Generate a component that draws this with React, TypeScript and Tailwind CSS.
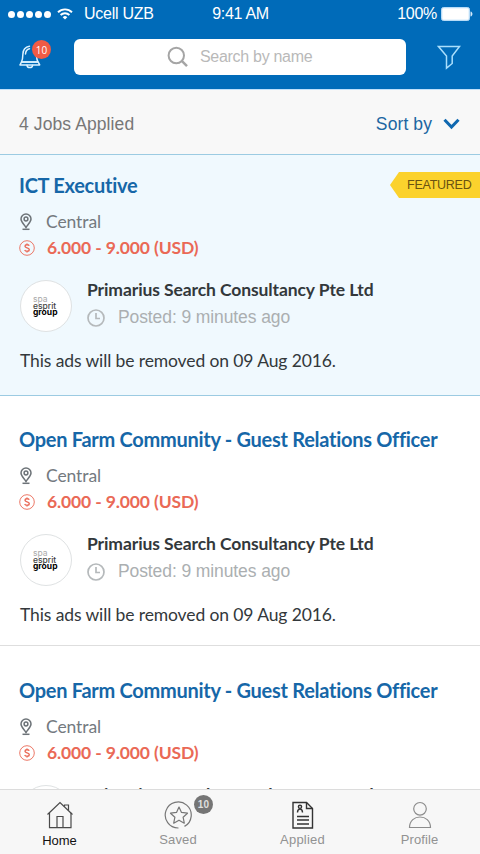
import clsx from 'clsx';
import type { ReactNode } from 'react';

interface Job {
  id: number;
  title: string;
  location: string;
  salary: string;
  company: string;
  posted: string;
  note: string;
  featured?: boolean;
}

const details = {
  location: 'Central',
  salary: '6.000 - 9.000 (USD)',
  company: 'Primarius Search Consultancy Pte Ltd',
  posted: 'Posted: 9 minutes ago',
  note: 'This ads will be removed on 09 Aug 2016.',
};

const jobs: Job[] = [
  { id: 1, title: 'ICT Executive', featured: true, ...details },
  { id: 2, title: 'Open Farm Community - Guest Relations Officer', ...details },
  { id: 3, title: 'Open Farm Community - Guest Relations Officer', ...details },
];

function StatusBar() {
  return (
    <div className="grid h-7 grid-cols-3 items-center pl-2 pr-[7px] text-[16px] text-white">
      <div className="flex items-center whitespace-nowrap">
        <div className="flex gap-[2px]">
          {[0, 1, 2, 3, 4].map((dot) => (
            <span key={dot} className="size-[7px] rounded-full bg-white" />
          ))}
        </div>
        <svg className="ml-[6px]" width="16" height="12" viewBox="0 0 16 12" fill="none" stroke="white" strokeWidth="1.9">
          <path d="M1 4.2a10 10 0 0 1 14 0" />
          <path d="M3.6 7a6.3 6.3 0 0 1 8.8 0" />
          <path d="M8 11.5 5.7 9.2a3.3 3.3 0 0 1 4.6 0z" fill="white" stroke="none" />
        </svg>
        <span className="ml-[11px] tracking-[-0.25px]">Ucell UZB</span>
      </div>
      <span className="text-center tracking-[-0.3px]">9:41 AM</span>
      <div className="flex items-center justify-end">
        <span className="tracking-[-0.3px]">100%</span>
        <svg className="ml-1" width="32" height="14" viewBox="0 0 32 14">
          <rect x="0.5" y="0.5" width="28" height="13" rx="2" fill="#d5eafa" stroke="#b9dcf7" />
          <rect x="1.5" y="1.5" width="26" height="11" rx="1" fill="white" />
          <path d="M29.5 4.5c2.6.6 2.6 4.4 0 5z" fill="#d5eafa" />
        </svg>
      </div>
    </div>
  );
}

function Header() {
  return (
    <header className="h-[89px] shrink-0 bg-[#006bb9]">
      <StatusBar />
      <div className="flex h-[58px] items-center px-[19px]">
        <div className="relative h-[26px] w-[55px]">
          <svg width="22" height="26" viewBox="0 0 22 26" fill="none" stroke="#dcf2ff" strokeWidth="1.5" strokeLinejoin="round" strokeLinecap="round">
            <path d="M10.5 2.2C6 2.9 4 6.5 3.9 10c-.1 3.8-.6 6.3-1.4 8h16.500c-.8-1.7-1.3-3-1.4-5" />
            <path d="M10.5 4.7C7.8 5.4 6.6 7.7 6.5 10" />
            <path d="M1 20.9 2.5 18h16.700l1.500 2.900z" />
            <path d="M8 21.300c.4 3 5.200 3 5.600 0" />
          </svg>
          <span className="absolute -top-[4px] left-[13px] flex size-[19px] items-center justify-center rounded-full bg-[#f05b45] font-['Open_Sans'] text-[10px] leading-none text-white">
            10
          </span>
        </div>
        <div className="flex h-9 w-[332px] items-center rounded-[6px] bg-white pl-[93px] text-[#b9b9b9]">
          <svg width="22" height="22" viewBox="0 0 22 22" fill="none" stroke="#a5a5a5" strokeWidth="2">
            <circle cx="9.3" cy="9.5" r="7.7" />
            <path d="m15 15.2 5 5" strokeWidth="2.4" />
          </svg>
          <span className="ml-[11px] text-[16px] tracking-[-0.3px]">Search by name</span>
        </div>
        <svg className="ml-auto" width="24" height="25" viewBox="0 0 24 25" fill="none" stroke="#a9defc" strokeWidth="1.5">
          <path d="M1.500 1.500h21l-7.300 9.500v7.500L9.500 23.200V11z" />
        </svg>
      </div>
    </header>
  );
}

function PinIcon() {
  return (
    <svg width="12" height="18" viewBox="0 0 12 18" fill="none" stroke="#6d7378" strokeWidth="1.5">
      <path d="M6 14.500C3.500 10.800 1 8.800 1 6a5 5 0 0 1 10 0c0 2.800-2.500 4.800-5 8.500z" />
      <circle cx="6" cy="6" r="1.900" />
      <path d="M2.500 16.300h7" />
    </svg>
  );
}

function SalaryIcon() {
  return (
    <svg width="16" height="16" viewBox="0 0 16 16" fill="none" stroke="#ea6956">
      <circle cx="8" cy="8" r="7.300" strokeWidth="0.9" />
      <path d="M10.200 5.700C9.600 4.400 6 4.300 6 6.200c0 2 4.300 1.300 4.300 3.500 0 2-3.800 2-4.600.3M8 3.600v1.200M8 11.300v1.200" strokeWidth="1.4" />
    </svg>
  );
}

function ClockIcon() {
  return (
    <svg width="18" height="18" viewBox="0 0 18 18" fill="none" stroke="#b5b9bb" strokeWidth="1.7">
      <circle cx="9" cy="9" r="8" />
      <path d="M9 4v5.500h4" />
    </svg>
  );
}

function CompanyLogo() {
  return (
    <div className="flex size-[52px] shrink-0 flex-col justify-center rounded-full border-[1.5px] border-[#dfe2e3] bg-white pl-[12px] font-['Inter'] text-[8.5px] leading-[6.5px]">
      <span className="text-[#aaa]">spa</span>
      <span className="font-medium text-[#444]">esprit</span>
      <span className="font-bold text-black">group</span>
    </div>
  );
}

function JobCard({ job }: { job: Job }) {
  return (
    <article
      className={clsx(
        "relative shrink-0 border-b pl-[19px] font-['Lato']",
        job.featured
          ? 'border-[#9ccbe2] bg-[#f0f9fe] pt-4 pb-[21px]'
          : 'border-[#dedede] bg-white pt-[29px] pb-[17px] last:pt-[30px]'
      )}
    >
      <h2 className="flex h-7 items-center whitespace-nowrap text-[20px] font-bold tracking-[-0.28px] text-[#1667a8]">
        {job.title}
      </h2>

      {/* Location and salary */}
      <div className="mt-[10px] flex h-[26px] items-center pl-[1px]">
        <PinIcon />
        <span className="ml-[14px] text-[17.5px] tracking-[-0.1px] text-[#747a7f]">{job.location}</span>
      </div>
      <div className="flex h-[26px] items-center">
        <SalaryIcon />
        <span className="ml-3 text-[17.5px] font-bold tracking-[-0.13px] text-[#ea6956]">{job.salary}</span>
      </div>

      {/* Company */}
      <div className="mt-[15px] flex h-14 items-end pl-[1px]">
        <CompanyLogo />
        <div className="ml-[15px] h-14 pt-[1px]">
          <div className="flex h-[27px] items-center whitespace-nowrap text-[17.5px] font-bold tracking-[-0.1px] text-[#33383b]">
            {job.company}
          </div>
          <div className="flex h-[27px] items-center">
            <ClockIcon />
            <span className="ml-[13px] font-['Liberation_Sans'] text-[17.5px] tracking-[-0.1px] text-[#abafb1]">
              {job.posted}
            </span>
          </div>
        </div>
      </div>

      <p className="mt-4 flex h-[26px] items-center pl-[1px] text-[17.5px] tracking-[-0.11px] text-[#33383b]">
        {job.note}
      </p>

      {job.featured && (
        <div className="absolute right-0 top-[17px] flex h-[26px] w-[90px] items-center bg-[#fbd22d] pl-[17px] font-['Liberation_Sans'] text-[12.5px] tracking-[-0.25px] text-[#6a5212] [clip-path:polygon(0_50%,9px_0,100%_0,100%_100%,9px_100%)]">
          FEATURED
        </div>
      )}
    </article>
  );
}

interface TabProps {
  label: string;
  className: string;
  badge?: number;
  active?: boolean;
  children: ReactNode;
}

function Tab({ label, className, badge, active, children }: TabProps) {
  return (
    <div className={clsx('flex flex-col items-center pt-[10px]', className)}>
      <div className="relative h-[30px] w-7">
        {children}
        {badge && (
          <span className="absolute -top-[5px] left-[30px] flex size-[19px] items-center justify-center rounded-full bg-[#757575] text-[10px] font-bold leading-none text-[#dedede]">
            {badge}
          </span>
        )}
      </div>
      <span
        className={clsx(
          'text-[13px] leading-5',
          active ? 'mt-[1px] text-[#111]' : 'text-[#929292]'
        )}
      >
        {label}
      </span>
    </div>
  );
}

function TabBar() {
  return (
    <nav className="flex h-[65px] shrink-0 border-t border-[#dcdcdc] bg-[#f7f7f7]">
      <Tab label="Home" className="w-[119px]" active>
        <svg width="28" height="30" viewBox="0 0 28 30" fill="none" stroke="#4a4a4a" strokeWidth="1.2">
          <path d="M1.500 14.500 14 2.500l12.500 12" />
          <path d="M3.500 12.700v15h21.500v-15M18.500 6.500V5h4v5.500M11 27.500v-11h6v11" />
        </svg>
      </Tab>
      <Tab label="Saved" className="w-[118px] tracking-[0.15px]" badge={10}>
        <svg width="28" height="30" viewBox="0 0 28 30" fill="none" stroke="#777" strokeWidth="1.2">
          <path d="M14.500 28A13 13 0 1 1 20.500 26.400" />
          <path d="m15 7 2.500 5.400 6 .8-4.400 4 1.200 6-5.300-3-5.300 3 1.200-6-4.400-4 6-.8z" strokeLinejoin="round" />
        </svg>
      </Tab>
      <Tab label="Applied" className="w-[131px] tracking-[0.2px]">
        <svg width="28" height="30" viewBox="0 0 28 30" fill="none" stroke="#333" strokeWidth="1.4">
          <path d="M4 2.500h13.500l6 6v19.500H4z" />
          <path d="M17.500 2.500v6h6" />
          <path d="M8 16.500h12M8 20h12M8 24h12" />
          <circle cx="11" cy="6.800" r="1.600" />
          <path d="M8.500 12.500c0-4.500 5-4.500 5 0" />
        </svg>
      </Tab>
      <Tab label="Profile" className="w-[103px] tracking-[0.1px]">
        <svg width="28" height="30" viewBox="0 0 28 30" fill="none" stroke="#8c8c8c" strokeWidth="1.2">
          <circle cx="14" cy="8.800" r="6.300" />
          <path d="M3.500 27.500c0-14 21-14 21 0z" />
        </svg>
      </Tab>
    </nav>
  );
}

export default function App() {
  return (
    <div className="flex h-[854px] w-[480px] flex-col overflow-hidden bg-white font-['Liberation_Sans',sans-serif]">
      <Header />
      <div className="flex h-[66px] shrink-0 items-center justify-between border-t border-b border-t-[#bfe0fb] border-b-[#9ccbe2] bg-[#f8f8f8] pl-[19px] pr-5 pt-[4px]">
        <span className="text-[17.5px] tracking-[0.1px] text-[#777]">4 Jobs Applied</span>
        <div className="flex items-center text-[#1c66a2]">
          <span className="text-[17.5px] tracking-[0.1px]">Sort by</span>
          <svg className="ml-[11px]" width="17" height="12" viewBox="0 0 17 12" fill="none" stroke="#0f68b0" strokeWidth="3">
            <path d="M1.500 1.700 8.500 9l7-7.300" />
          </svg>
        </div>
      </div>
      <main className="flex min-h-0 flex-1 flex-col overflow-hidden">
        {jobs.map((job) => (
          <JobCard key={job.id} job={job} />
        ))}
      </main>
      <TabBar />
    </div>
  );
}
